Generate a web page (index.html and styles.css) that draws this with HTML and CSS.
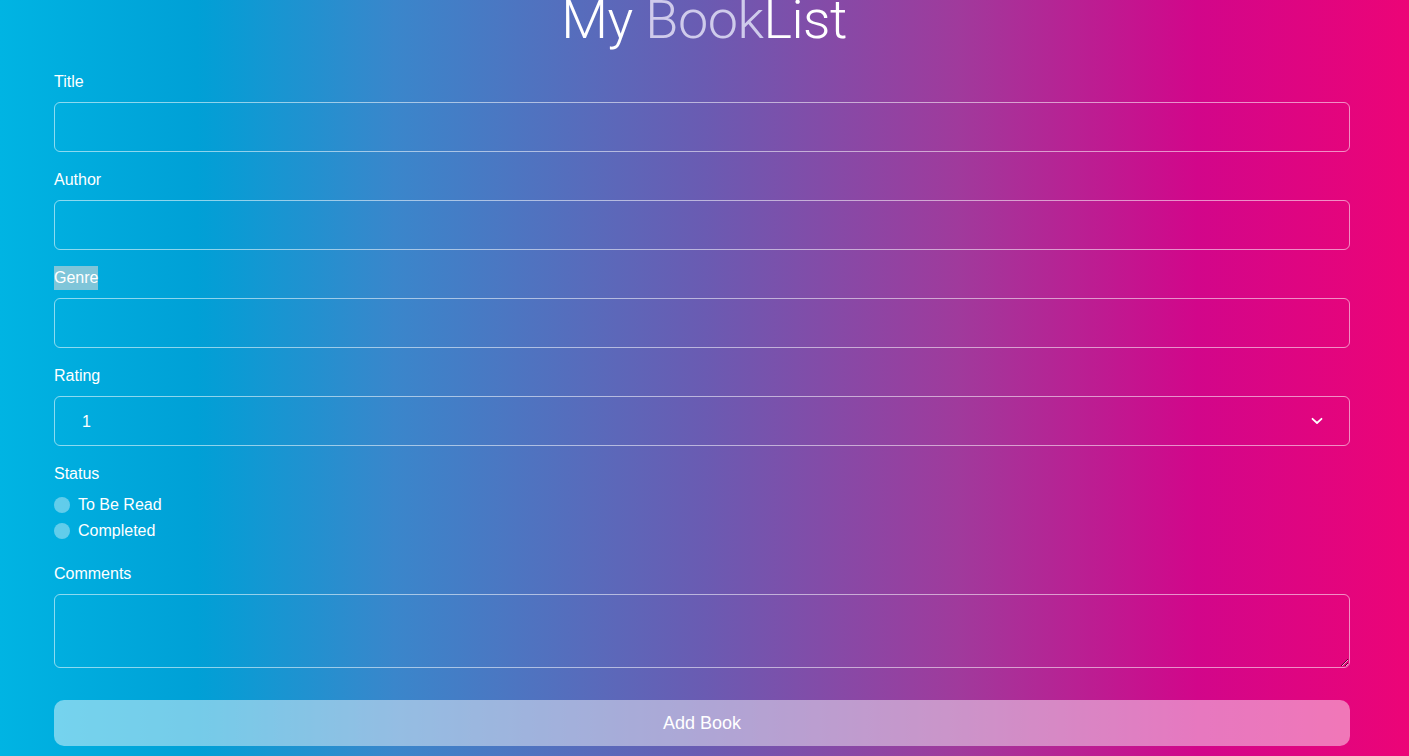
FILE: index.html
```html
<!DOCTYPE html>
<html lang="en">
<head>
<meta charset="utf-8">
<title>My BookList</title>
<link rel="stylesheet" href="styles.css">
</head>
<body>
<div class="page">
  <h1 class="brand">My <span class="brand-accent">Book</span>List</h1>
  <form class="book-form">
    <div class="field">
      <label class="field-label" for="title">Title</label>
      <input class="field-input" id="title" type="text">
    </div>
    <div class="field">
      <label class="field-label" for="author">Author</label>
      <input class="field-input" id="author" type="text">
    </div>
    <div class="field">
      <label class="field-label" for="genre"><span class="selected-text">Genre</span></label>
      <input class="field-input" id="genre" type="text">
    </div>
    <div class="field">
      <label class="field-label" for="rating">Rating</label>
      <div class="select-wrap">
        <select class="field-input field-select" id="rating">
          <option>1</option><option>2</option><option>3</option><option>4</option><option>5</option>
        </select>
        <svg class="select-chevron" width="12" height="8" viewBox="0 0 12 8"><path d="M1.5 1.8 L6 6 L10.5 1.8" fill="none" stroke="#fff" stroke-width="1.8" stroke-linecap="round" stroke-linejoin="round"/></svg>
      </div>
    </div>
    <div class="field field-status">
      <span class="field-label">Status</span>
      <label class="radio-row"><input type="radio" name="status" class="radio"><span>To Be Read</span></label>
      <label class="radio-row"><input type="radio" name="status" class="radio"><span>Completed</span></label>
    </div>
    <div class="field">
      <label class="field-label" for="comments">Comments</label>
      <textarea class="field-input field-textarea" id="comments"></textarea>
    </div>
    <button type="button" class="submit-btn">Add Book</button>
  </form>
</div>
</body>
</html>
```
FILE: styles.css
```css
html, body {
  margin: 0;
  padding: 0;
}
body {
  min-height: 100vh;
  background: linear-gradient(90deg, #00b4e3 0%, #00a0d6 14%, #3a86cb 28%, #6a5bb2 50%, #a03a9c 68%, #d2068a 85%, #ec0477 100%);
  font-family: "Liberation Sans", Arial, sans-serif;
  color: #fff;
}
.page {
  padding: 0 59px 0 54px;
}
.brand {
  margin: -12px 0 0 0;
  text-align: center;
  font-family: Roboto, "Liberation Sans", sans-serif;
  font-weight: 300;
  font-size: 54px;
  line-height: 64px;
  color: #fff;
  letter-spacing: -0.5px;
  padding-left: 4px;
}
.brand-accent {
  color: #cfcbeb;
}
.book-form {
  display: flex;
  flex-direction: column;
  margin-top: 18px;
}
.field {
  display: flex;
  flex-direction: column;
  margin-bottom: 16px;
}
.field-label {
  font-size: 16px;
  line-height: 24px;
  margin-bottom: 8px;
  align-self: flex-start;
}
.selected-text {
  background: rgba(170, 205, 215, 0.75);
  display: inline-block;
}
.field-input {
  box-sizing: border-box;
  height: 50px;
  width: 100%;
  background: transparent;
  border: 1px solid rgba(255, 255, 255, 0.55);
  border-radius: 6px;
  color: #fff;
  font-family: inherit;
  font-size: 16px;
  padding: 0 27px;
  outline: none;
}
.select-wrap {
  position: relative;
}
.field-select {
  appearance: none;
  -webkit-appearance: none;
}
.select-chevron {
  position: absolute;
  right: 27px;
  top: 21px;
  pointer-events: none;
}
.field-status {
  margin-bottom: 18px;
}
.field-status .field-label {
  margin-bottom: 6px;
}
.radio-row {
  display: flex;
  align-items: center;
  gap: 8px;
  font-size: 16px;
  line-height: 26px;
}
.radio {
  appearance: none;
  -webkit-appearance: none;
  width: 16px;
  height: 16px;
  margin: 0;
  border-radius: 50%;
  background: rgba(255, 255, 255, 0.38);
  border: none;
}
.field-textarea {
  height: 74px;
  padding: 8px 12px;
  resize: vertical;
}
.submit-btn {
  margin-top: 16px;
  height: 46px;
  border: none;
  border-radius: 10px;
  background: rgba(255, 255, 255, 0.46);
  color: #fff;
  font-family: inherit;
  font-size: 18px;
}
```
